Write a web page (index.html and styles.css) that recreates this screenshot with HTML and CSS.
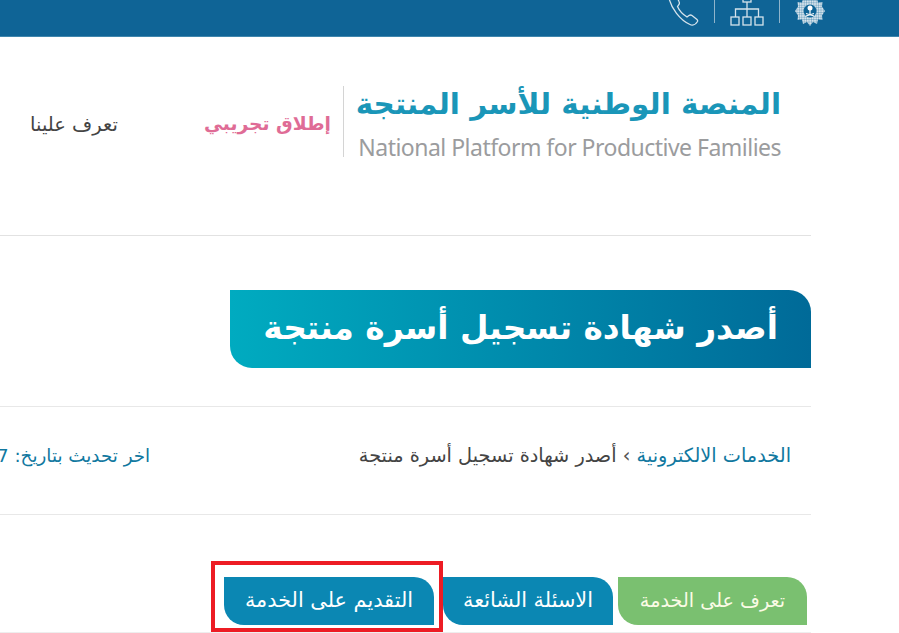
FILE: index.html
```html
<!DOCTYPE html>
<html lang="ar" dir="rtl">
<head>
    <meta charset="UTF-8">
    <title>أصدر شهادة تسجيل أسرة منتجة</title>
    <link rel="stylesheet" href="styles.css">
</head>
<body>
    <div class="topbar">
        <div class="topbar-icons">
            <svg class="icon-emblem" width="30" height="30" viewBox="0 0 30 30">
                <defs>
                    <pattern id="emblem-dots" width="2.400" height="2.400" patternUnits="userSpaceOnUse">
                        <rect width="1.500" height="1.500" fill="#e3edf3"/>
                    </pattern>
                </defs>
                <polygon class="emblem-star" points="15,0 18,4 22,2 23,6.500 27.500,6 27,10.500 30,15 27,19.500 27.500,24 23,23.500 22,28 18,26 15,30 12,26 8,28 7,23.500 2.500,24 3,19.500 0,15 3,10.500 2.500,6 7,6.500 8,2 12,4"/>
                <circle class="emblem-disc" cx="15" cy="15" r="6.500"/>
                <circle class="emblem-palm" cx="15" cy="12" r="2.500"/>
                <path class="emblem-mark" d="M15 13v5M11 20l8-2.500M19 20l-8-2.500"/>
            </svg>
            <span class="topbar-sep"></span>
            <svg class="icon-sitemap" width="34" height="30" viewBox="0 0 34 30">
                <rect x="13" y="0" width="8" height="6"/>
                <path d="M17 6v15M5.500 21v-8h23v8"/>
                <rect x="1" y="21" width="8" height="8"/>
                <rect x="13" y="21" width="8" height="8"/>
                <rect x="25" y="21" width="8" height="8"/>
            </svg>
            <span class="topbar-sep"></span>
            <svg class="icon-phone" width="31" height="30" viewBox="0 0 31 30">
                <path d="M1 2C3 12 12 24 22 28.500c3 1.500 6-.5 7.500-3 .5-1 0-1.500-.5-2l-5-4c-1-.7-2-.7-3 0l-2 1.500c-4-2.500-8-7-9.500-10.500l1.500-2c.6-1 .5-2 0-3L8-1"/>
            </svg>
        </div>
    </div>

    <div class="page">
        <header class="site-header">
            <div class="logo">
                <div class="logo-ar">المنصة الوطنية للأسر المنتجة</div>
                <div class="logo-en" dir="ltr">National Platform for Productive Families</div>
            </div>
            <div class="logo-badge">إطلاق تجريبي</div>
            <a class="nav-link">تعرف علينا</a>
        </header>

        <div class="title-row">
            <h1 class="title-banner">أصدر شهادة تسجيل أسرة منتجة</h1>
        </div>

        <div class="crumbs-row">
            <div class="crumbs"><a>الخدمات الالكترونية</a> <span class="crumb-sep">&rsaquo;</span> أصدر شهادة تسجيل أسرة منتجة</div>
            <div class="updated">اخر تحديث بتاريخ: 7</div>
        </div>

        <div class="tabs">
            <a class="tab tab-green">تعرف على الخدمة</a>
            <a class="tab">الاسئلة الشائعة</a>
            <a class="tab tab-wide">التقديم على الخدمة<span class="highlight-box"></span></a>
        </div>
    </div>
</body>
</html>
```

FILE: styles.css
```css
html, body {
    margin: 0;
    padding: 0;
    height: 633px;
    overflow: hidden;
    background: #fff;
}
body {
    font-family: "DejaVu Sans", sans-serif;
    color: #444;
}
.topbar {
    height: 36px;
    background: #0f6496;
    border-bottom: 1px solid #3f86ad;
    padding-right: 74px;
    overflow: hidden;
}
.topbar-icons {
    display: flex;
    align-items: flex-start;
    gap: 15px;
    margin-top: -4px;
}
.topbar-icons svg {
    fill: none;
    stroke: #d5e3ec;
    stroke-width: 1.3;
    flex: none;
}
.topbar-sep {
    width: 1px;
    height: 27px;
    background: #8fb4cb;
}
.icon-emblem .emblem-star {
    fill: url(#emblem-dots);
    stroke: none;
}
.icon-emblem .emblem-disc {
    fill: #0f6496;
    stroke: none;
}
.icon-emblem .emblem-palm {
    fill: #fff;
    stroke: none;
}
.icon-emblem .emblem-mark {
    stroke: #fff;
    stroke-width: 1.2;
}
.page {
    width: 811px;
    margin-right: 88px;
    overflow: hidden;
}
.site-header {
    height: 199px;
    box-sizing: border-box;
    border-bottom: 1px solid #e2e2e2;
    display: flex;
    align-items: flex-start;
    padding-top: 49px;
    padding-right: 30px;
    white-space: nowrap;
}
.logo {
    width: 423px;
    padding-left: 14px;
    border-left: 1px solid #d4d4d4;
    height: 71px;
    flex: none;
}
.logo-ar {
    font-size: 29.500px;
    line-height: 36px;
    font-weight: bold;
    color: #1a96b8;
}
.logo-en {
    font-family: "Noto Sans", sans-serif;
    font-size: 23px;
    letter-spacing: -0.52px;
    line-height: 28px;
    margin-top: 11px;
    color: #9b9c9e;
    text-align: right;
}
.logo-badge {
    color: #df6c96;
    font-size: 18.700px;
    font-weight: bold;
    margin: 27px 12px 0 0;
}
.nav-link {
    color: #444;
    font-size: 19.500px;
    margin: 27px 86px 0 0;
}
.title-row {
    height: 171px;
    box-sizing: border-box;
    padding-top: 54px;
    border-bottom: 1px solid #e8e8e8;
}
.title-banner {
    width: 581px;
    height: 78px;
    box-sizing: border-box;
    margin: 0;
    padding-right: 33px;
    background: linear-gradient(to left, #006a98, #00abc0);
    border-radius: 0 22px 0 22px;
    color: #fff;
    font-size: 32.800px;
    font-weight: bold;
    line-height: 76px;
    white-space: nowrap;
}
.crumbs-row {
    height: 108px;
    box-sizing: border-box;
    border-bottom: 1px solid #e8e8e8;
    display: flex;
    justify-content: space-between;
    padding: 36px 20px 0 0;
    font-size: 19.300px;
    line-height: 26px;
    white-space: nowrap;
}
.crumbs a {
    color: #11789f;
}
.crumb-sep {
    color: #555;
}
.updated {
    color: #11789f;
    font-size: 18.300px;
    margin-left: -3px;
}
.tabs {
    display: flex;
    gap: 5px;
    padding: 62px 4px 7px 0;
    border-bottom: 1px solid #eee;
}
.tab {
    position: relative;
    height: 48px;
    width: 170px;
    background: #0b87b3;
    border-radius: 0 20px 0 20px;
    color: #fff;
    font-size: 20.800px;
    line-height: 47px;
    text-align: center;
    white-space: nowrap;
}
.tab-green {
    width: 189px;
    background: #7ac070;
    font-size: 19.200px;
    color: #fbfbe6;
}
.tab-wide {
    width: 210px;
    margin-right: 4px;
}
.highlight-box {
    position: absolute;
    top: -16px;
    bottom: -7px;
    right: -9px;
    left: -13px;
    border: 4px solid #ed1c24;
}
```
